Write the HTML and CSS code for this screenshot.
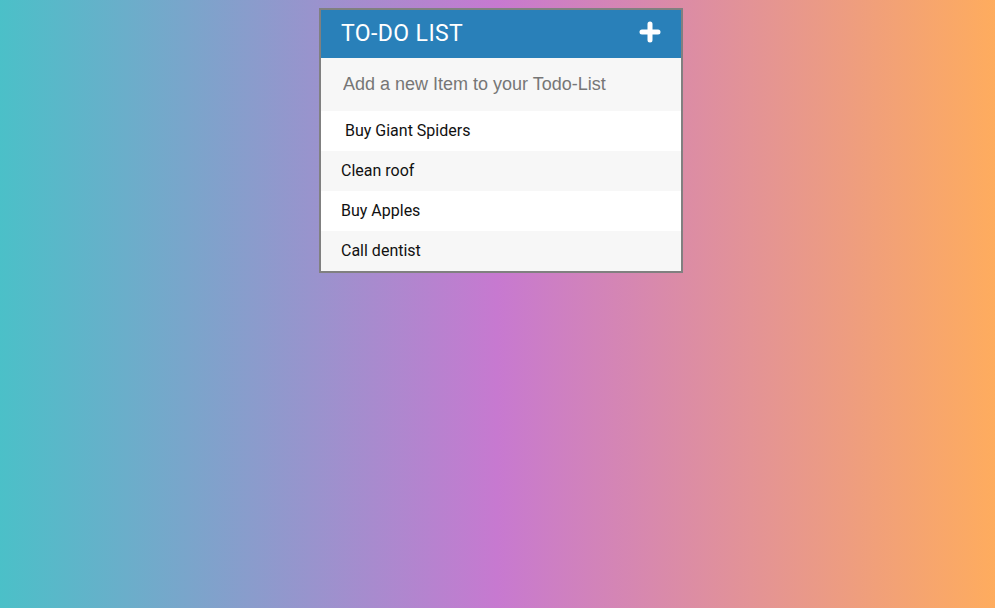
FILE: index.html
```html
<!DOCTYPE html>
<html lang="en">
<head>
<meta charset="utf-8">
<title>To-Do List</title>
<link rel="stylesheet" href="styles.css">
</head>
<body>
<div class="page">
  <div class="card">
    <header class="card-header">
      <h1 class="title">TO-DO LIST</h1>
      <svg class="plus" width="22" height="22" viewBox="0 0 22 22" aria-hidden="true">
        <path d="M11 3 V19 M3 11 H19" stroke="#fff" stroke-width="5" stroke-linecap="round" fill="none"/>
      </svg>
    </header>
    <input class="new-item" type="text" placeholder="Add a new Item to your Todo-List">
    <ul class="items">
      <li class="item">&nbsp;Buy Giant Spiders</li>
      <li class="item">Clean roof</li>
      <li class="item">Buy Apples</li>
      <li class="item">Call dentist</li>
    </ul>
  </div>
</div>
</body>
</html>
```
FILE: styles.css
```css
html, body {
  height: 100%;
}
body {
  margin: 0;
  background: linear-gradient(to right, #4bc0c8 0%, #c779d0 50%, #feac5e 100%);
  font-family: Roboto, "Liberation Sans", Arial, sans-serif;
}
.page {
  display: flex;
  justify-content: center;
  padding: 8px 8px 0 15px;
}
.card {
  width: 360px;
  border: 2px solid #808080;
  background: #fff;
}
.card-header {
  display: flex;
  align-items: center;
  justify-content: space-between;
  height: 48px;
  padding: 0 20px;
  background: #2980b9;
  box-sizing: border-box;
}
.title {
  margin: 0 0 2px;
  font-family: Roboto, sans-serif;
  font-weight: 400;
  font-size: 23px;
  letter-spacing: 0.4px;
  color: #fff;
  line-height: 1;
}
.plus {
  display: block;
  margin-bottom: 5px;
}
.new-item {
  display: block;
  width: 100%;
  height: 53px;
  box-sizing: border-box;
  margin: 0;
  border: none;
  outline: none;
  padding: 0 22px;
  background: #f7f7f7;
  font-family: "Liberation Sans", Arial, sans-serif;
  font-size: 18px;
  color: #333;
}
.new-item::placeholder {
  color: #767676;
  opacity: 1;
}
.items {
  list-style: none;
  margin: 0;
  padding: 0;
}
.item {
  height: 40px;
  line-height: 40px;
  padding: 0 20px;
  font-family: Roboto, sans-serif;
  font-size: 16px;
  color: #111;
  background: #fff;
}
.item:nth-child(even) {
  background: #f7f7f7;
}
```
